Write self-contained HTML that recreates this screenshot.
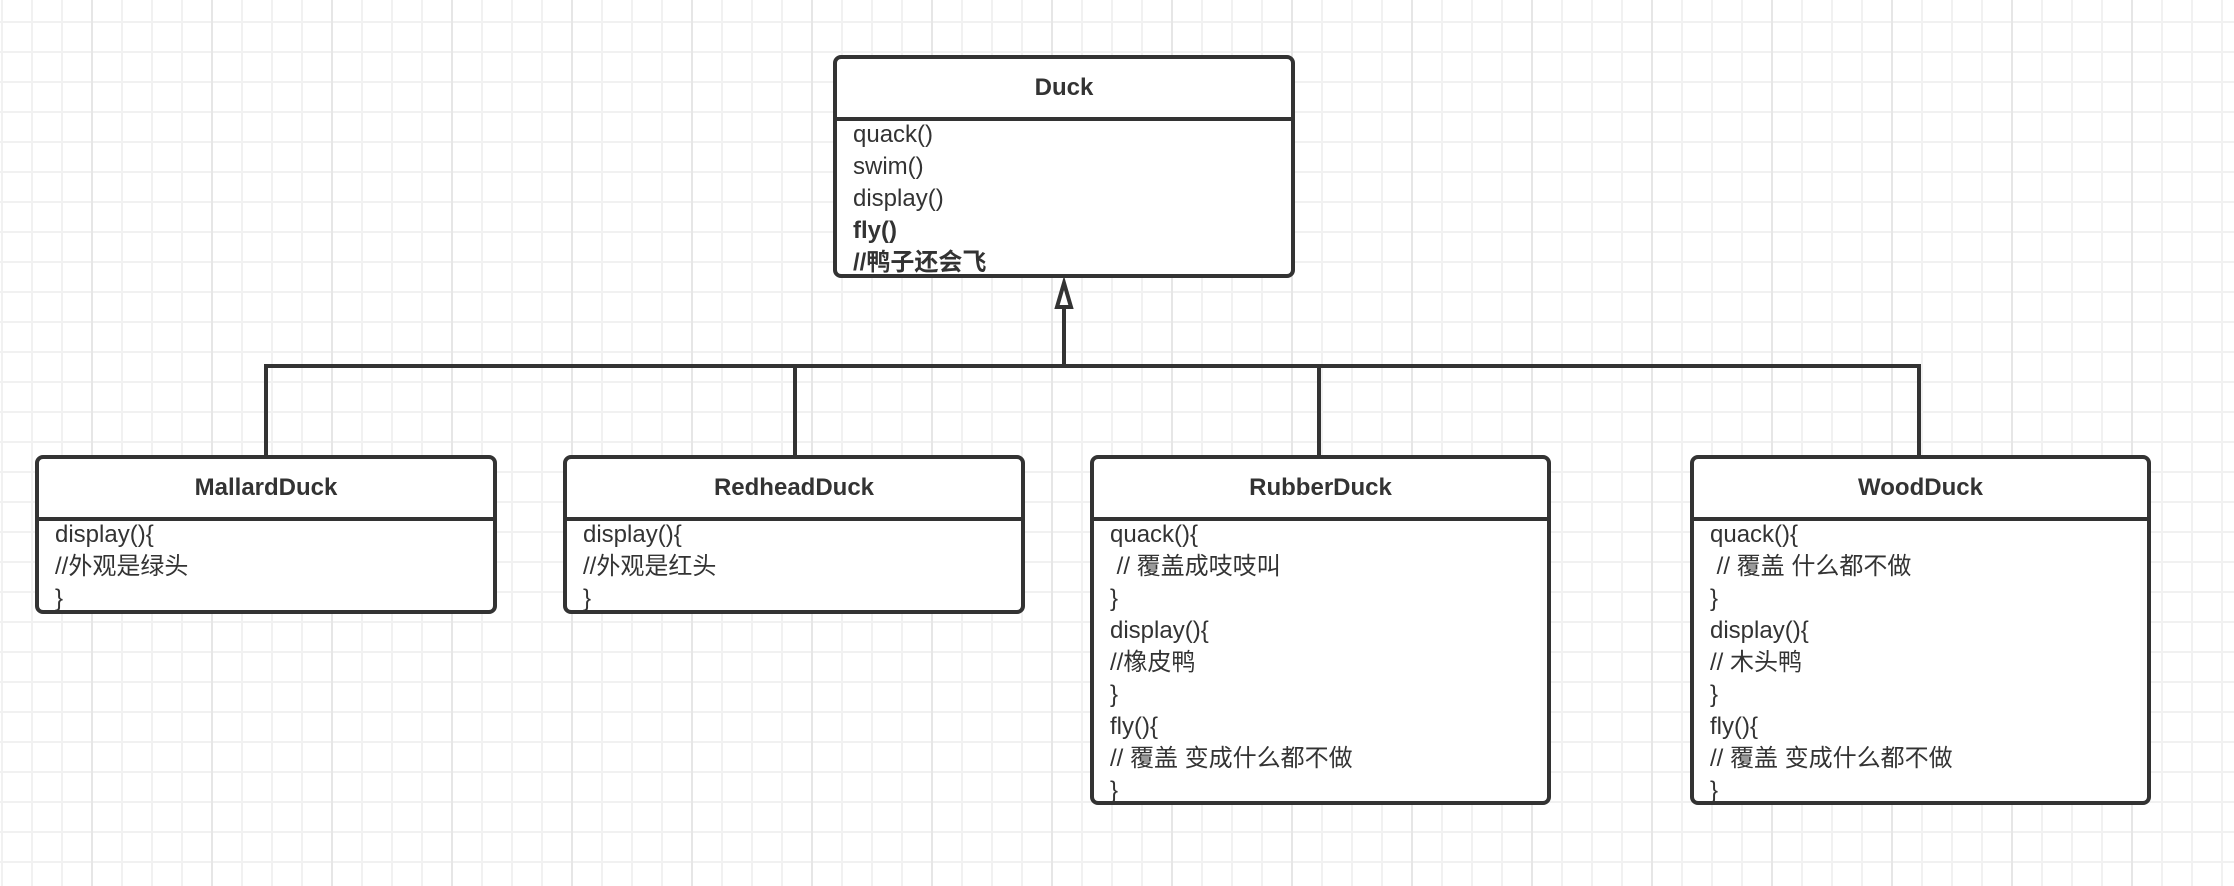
<!DOCTYPE html>
<html><head><meta charset="utf-8"><style>
html,body{margin:0;padding:0}
body{width:2234px;height:886px;position:relative;overflow:hidden;background:#fff;
background-image:
linear-gradient(to right,#e6e6e6 0,#e6e6e6 2px,transparent 2px),
linear-gradient(to right,#f1f1f1 0,#f1f1f1 2px,transparent 2px),
linear-gradient(to bottom,#f1f1f1 0,#f1f1f1 2px,transparent 2px);
background-size:120px 100%,30px 100%,100% 30px;
background-position:91px 0,1px 0,0 21px;
font-family:"Liberation Sans","Noto Sans CJK SC",sans-serif;color:#333}
.box{position:absolute;border:4px solid #333;border-radius:8px;background:#fff;box-sizing:border-box;overflow:hidden}
.hd{height:58px;border-bottom:4px solid #333;text-align:center;line-height:58px;font-weight:bold;font-size:24px;color:#333}
.bd{margin-top:-2px;padding:0 0 0 16px;font-size:24px;line-height:32px;white-space:pre;color:#333}
.l{position:absolute;background:#333}
</style></head><body>
<div class="l" style="left:266px;top:364px;width:1655px;height:4px"></div>
<div class="l" style="left:264px;top:364px;width:4px;height:92px"></div>
<div class="l" style="left:793px;top:364px;width:4px;height:92px"></div>
<div class="l" style="left:1317px;top:364px;width:4px;height:92px"></div>
<div class="l" style="left:1917px;top:364px;width:4px;height:92px"></div>
<div class="l" style="left:1062px;top:300px;width:4px;height:66px"></div>
<svg style="position:absolute;left:1050px;top:278px" width="30" height="34"><polygon points="14,5 7,29 21,29" fill="#fff" stroke="#333" stroke-width="4"/></svg>

<div class="box" style="left:833px;top:55px;width:462px;height:223px">
<div class="hd">Duck</div>
<div class="bd">quack()
swim()
display()
<b>fly()</b>
<b>//鸭子还会飞</b></div></div>

<div class="box" style="left:35px;top:455px;width:462px;height:159px">
<div class="hd">MallardDuck</div>
<div class="bd">display(){
//外观是绿头
}</div></div>

<div class="box" style="left:563px;top:455px;width:462px;height:159px">
<div class="hd">RedheadDuck</div>
<div class="bd">display(){
//外观是红头
}</div></div>

<div class="box" style="left:1090px;top:455px;width:461px;height:350px">
<div class="hd">RubberDuck</div>
<div class="bd">quack(){
 // 覆盖成吱吱叫
}
display(){
//橡皮鸭
}
fly(){
// 覆盖 变成什么都不做
}</div></div>

<div class="box" style="left:1690px;top:455px;width:461px;height:350px">
<div class="hd">WoodDuck</div>
<div class="bd">quack(){
 // 覆盖 什么都不做
}
display(){
// 木头鸭
}
fly(){
// 覆盖 变成什么都不做
}</div></div>
</body></html>
